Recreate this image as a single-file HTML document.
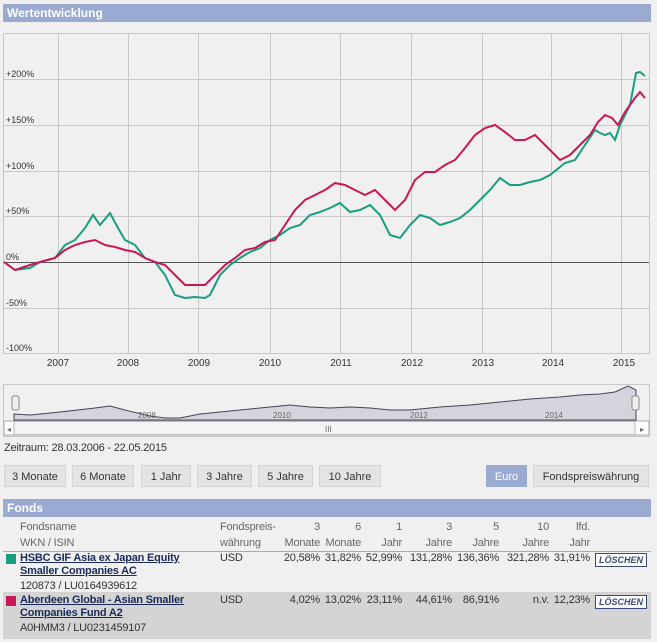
<!DOCTYPE html><html><head><meta charset="utf-8"><style>
body{margin:0;background:#f0f0f0;font-family:"Liberation Sans",Arial,sans-serif;width:657px;height:642px;overflow:hidden;position:relative;color:#333}
.hdr{position:absolute;left:3px;width:648px;height:18px;background:#9aaad0;color:#fff;font-weight:bold;font-size:12px;line-height:18px;padding-left:4px;box-sizing:border-box}
.btn{position:absolute;top:465px;height:22px;background:#e4e4e4;border:1px solid #d4d4d4;font-size:11px;line-height:22px;text-align:center;box-sizing:border-box}
.t{position:absolute;font-size:11px;white-space:nowrap;letter-spacing:-0.2px}
.r{text-align:right;width:60px}
.h{color:#666;line-height:16px;top:519px}
a{color:#1a2a5a;font-weight:bold;text-decoration:underline}
.del{position:absolute;left:595px;width:52px;height:14px;border:1px solid #3a4a7a;background:#fff;color:#3a4a7a;font-size:9px;font-weight:bold;font-style:italic;line-height:12px;text-align:center;box-sizing:border-box}
</style></head><body>
<div class="hdr" style="top:4px">Wertentwicklung</div>
<svg style="position:absolute;left:0;top:0" width="657" height="440">
<rect x="3.5" y="33.5" width="646" height="320" fill="#f0f0f0" stroke="#c8c8c8"/>
<g stroke="#c8c8c8" stroke-width="1">
<line x1="58.5" y1="33" x2="58.5" y2="353"/><line x1="128.5" y1="33" x2="128.5" y2="353"/><line x1="198.5" y1="33" x2="198.5" y2="353"/><line x1="270.5" y1="33" x2="270.5" y2="353"/><line x1="340.5" y1="33" x2="340.5" y2="353"/><line x1="411.5" y1="33" x2="411.5" y2="353"/><line x1="482.5" y1="33" x2="482.5" y2="353"/><line x1="551.5" y1="33" x2="551.5" y2="353"/><line x1="621.5" y1="33" x2="621.5" y2="353"/>
<line x1="3" y1="79.5" x2="649" y2="79.5"/><line x1="3" y1="125.5" x2="649" y2="125.5"/><line x1="3" y1="171.5" x2="649" y2="171.5"/><line x1="3" y1="216.5" x2="649" y2="216.5"/><line x1="3" y1="308.5" x2="649" y2="308.5"/>
</g>
<line x1="3" y1="262.5" x2="649" y2="262.5" stroke="#555"/>
<g font-size="9" fill="#333" font-family="Liberation Sans">
<text x="6" y="77">+200%</text><text x="6" y="123">+150%</text><text x="6" y="169">+100%</text><text x="6" y="214">+50%</text><text x="6" y="260">0%</text><text x="6" y="306">-50%</text><text x="6" y="351">-100%</text>
<g text-anchor="middle" font-size="10"><text x="58" y="366">2007</text><text x="128" y="366">2008</text><text x="199" y="366">2009</text><text x="270" y="366">2010</text><text x="341" y="366">2011</text><text x="412" y="366">2012</text><text x="483" y="366">2013</text><text x="553" y="366">2014</text><text x="624" y="366">2015</text></g>
</g>
<polyline fill="none" stroke="#1a9e80" stroke-width="2" points="4,262 15,270 30,268 40,262 55,258 65,245 75,240 85,228 93,215 100,225 110,213 118,228 125,240 135,245 145,258 155,262 165,275 175,295 185,298 195,297 205,298 210,295 220,275 230,265 240,258 250,252 260,248 270,240 280,235 290,228 300,225 310,215 320,212 330,208 340,203 350,212 360,210 370,205 380,215 390,235 400,238 410,225 420,215 430,218 440,225 450,222 460,218 470,210 480,200 490,190 500,178 510,185 520,185 530,182 540,180 550,175 560,167 565,163 575,160 585,145 595,130 600,133 605,135 610,133 615,140 620,125 630,105 636,73 640,72 645,76"/>
<polyline fill="none" stroke="#c8185a" stroke-width="2" points="4,262 15,270 30,265 40,262 55,258 65,250 75,245 85,242 95,240 105,245 115,247 125,250 135,252 145,258 155,262 165,265 175,275 185,285 195,285 205,285 215,275 225,265 235,258 245,250 255,248 265,242 275,240 285,225 295,210 305,200 315,195 325,190 335,183 345,185 355,190 365,195 375,190 385,200 395,210 405,200 415,180 425,172 435,172 445,165 455,160 465,148 475,135 485,128 495,125 505,132 515,140 525,140 535,135 545,145 555,155 560,160 570,155 580,145 590,135 598,122 605,115 612,118 618,125 625,112 635,98 640,92 645,98"/>
<rect x="3.5" y="384.5" width="646" height="52" fill="#f0f0f0" stroke="#c8c8c8"/>
<path d="M14,414 L30,415 L60,412 L95,408 L110,406 L125,410 L150,416 L165,418 L180,418 L200,414 L230,411 L260,408 L290,405 L310,407 L330,408 L350,407 L370,408 L390,410 L410,410 L440,407 L470,405 L500,402 L530,399 L560,397 L580,395 L600,394 L615,392 L628,386 L636,390 L636,420 L14,420 Z" fill="#d4d4dc" stroke="#445" stroke-width="1"/>
<g font-size="8" fill="#666" font-family="Liberation Sans"><text x="138" y="418">2008</text><text x="273" y="418">2010</text><text x="410" y="418">2012</text><text x="545" y="418">2014</text></g>
<rect x="12" y="396" width="7" height="14" rx="2" fill="#eee" stroke="#888"/>
<rect x="632" y="396" width="7" height="14" rx="2" fill="#eee" stroke="#888"/>
<rect x="4" y="421" width="645" height="14" fill="#fff" stroke="#aaa"/>
<rect x="14" y="421.5" width="621" height="13" fill="#f4f4f4" stroke="#bbb"/>
<text x="325" y="432" font-size="8" fill="#666">III</text>
<text x="7" y="432" font-size="8" fill="#666">◂</text><text x="640" y="432" font-size="8" fill="#666">▸</text>
</svg>
<div class="t" style="left:4px;top:442px">Zeitraum: 28.03.2006 - 22.05.2015</div>
<div class="btn" style="left:4px;width:62px">3 Monate</div>
<div class="btn" style="left:72px;width:62px">6 Monate</div>
<div class="btn" style="left:141px;width:50px">1 Jahr</div>
<div class="btn" style="left:197px;width:55px">3 Jahre</div>
<div class="btn" style="left:258px;width:55px">5 Jahre</div>
<div class="btn" style="left:319px;width:62px">10 Jahre</div>
<div class="btn" style="left:486px;width:41px;background:#9aaad0;color:#fff;border-color:#9aaad0">Euro</div>
<div class="btn" style="left:533px;width:116px">Fondspreiswährung</div>
<div class="hdr" style="top:499px">Fonds</div>
<div style="position:absolute;left:3px;top:517px;width:648px;height:34px;border-bottom:1px solid #9aaad0"></div>
<div style="position:absolute;left:3px;top:592px;width:648px;height:47px;background:#d4d4d4"></div>
<div class="t h" style="left:20px">Fondsname<br>WKN / ISIN</div>
<div class="t h" style="left:220px">Fondspreis-<br>währung</div>
<div class="t h r" style="left:260px">3<br>Monate</div>
<div class="t h r" style="left:301px">6<br>Monate</div>
<div class="t h r" style="left:342px">1<br>Jahr</div>
<div class="t h r" style="left:392px">3<br>Jahre</div>
<div class="t h r" style="left:439px">5<br>Jahre</div>
<div class="t h r" style="left:489px">10<br>Jahre</div>
<div class="t h r" style="left:530px">lfd.<br>Jahr</div>
<div style="position:absolute;left:6px;top:554px;width:10px;height:10px;background:#1a9e80"></div>
<div class="t" style="left:20px;top:552px;line-height:13px"><a>HSBC GIF Asia ex Japan Equity<br>Smaller Companies AC</a><br><span style="line-height:16px">120873 / LU0164939612</span></div>
<div class="t" style="left:220px;top:552px">USD</div>
<div class="t r" style="left:260px;top:552px">20,58%</div>
<div class="t r" style="left:301px;top:552px">31,82%</div>
<div class="t r" style="left:342px;top:552px">52,99%</div>
<div class="t r" style="left:392px;top:552px">131,28%</div>
<div class="t r" style="left:439px;top:552px">136,36%</div>
<div class="t r" style="left:489px;top:552px">321,28%</div>
<div class="t r" style="left:530px;top:552px">31,91%</div>
<div class="del" style="top:553px">LÖSCHEN</div>
<div style="position:absolute;left:6px;top:596px;width:10px;height:10px;background:#c8185a"></div>
<div class="t" style="left:20px;top:594px;line-height:13px"><a>Aberdeen Global - Asian Smaller<br>Companies Fund A2</a><br><span style="line-height:16px">A0HMM3 / LU0231459107</span></div>
<div class="t" style="left:220px;top:594px">USD</div>
<div class="t r" style="left:260px;top:594px">4,02%</div>
<div class="t r" style="left:301px;top:594px">13,02%</div>
<div class="t r" style="left:342px;top:594px">23,11%</div>
<div class="t r" style="left:392px;top:594px">44,61%</div>
<div class="t r" style="left:439px;top:594px">86,91%</div>
<div class="t r" style="left:489px;top:594px">n.v.</div>
<div class="t r" style="left:530px;top:594px">12,23%</div>
<div class="del" style="top:595px">LÖSCHEN</div>
</body></html>
